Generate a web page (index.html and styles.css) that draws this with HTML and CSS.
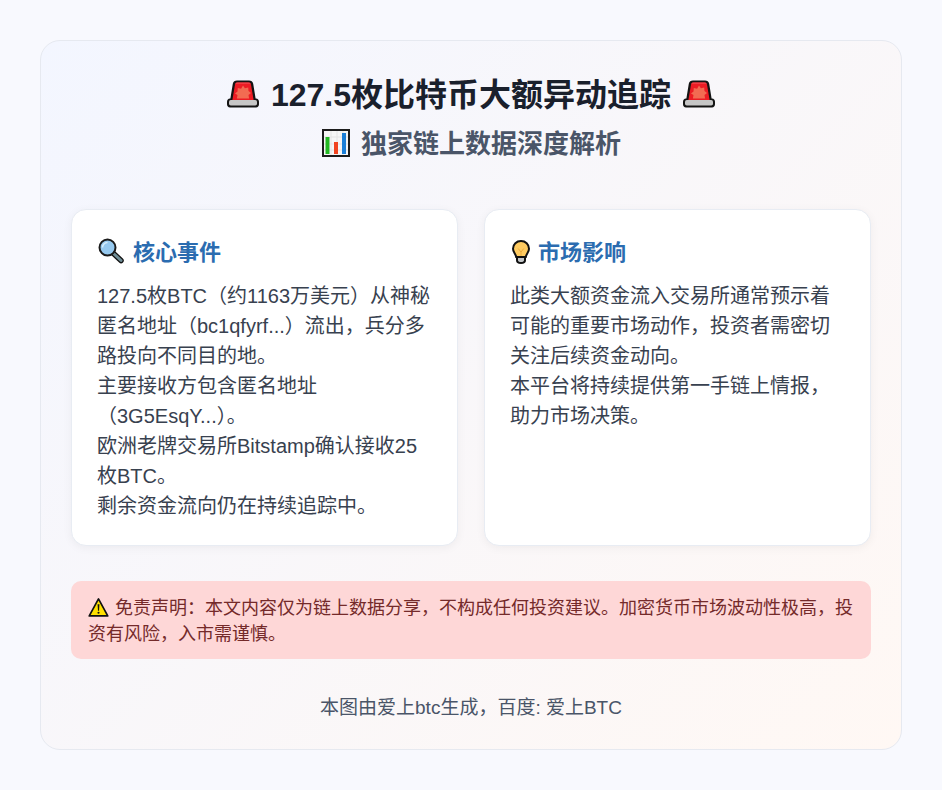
FILE: index.html
```html
<!DOCTYPE html>
<html lang="zh-CN">
<head>
<meta charset="utf-8">
<title>127.5枚比特币大额异动追踪</title>
<link rel="stylesheet" href="styles.css">
</head>
<body>
<svg class="defs" width="0" height="0" aria-hidden="true">
  <symbol id="siren" viewBox="0 0 32 28">
    <path d="M10 0.500h12c2.200 0 3.700 1.200 4.200 3.200L28.600 18.500h.4c1.800 0 3 1.300 3 3.200v2.600c0 2-1.200 3.200-3 3.200H3c-1.800 0-3-1.200-3-3.200v-2.600c0-1.900 1.200-3.200 3-3.200h.4L5.800 3.700c.5-2 2-3.200 4.200-3.200z" fill="#141414"/>
    <path d="M10.500 2.500h11c1.300 0 2.200.7 2.500 2L26.600 20H5.400L8 4.500c.3-1.300 1.200-2 2.500-2z" fill="#ec1c24"/>
    <path d="M10.500 2.500h11c1.100 0 1.900.5 2.300 1.300H8.200c.4-.8 1.200-1.300 2.300-1.300z" fill="#f4464d"/>
    <path d="M16 5.500l1.900 2.800 3.300-.8.300 3.400 2.500 2.100-2.500 2.100.6 3.400H9.900l.6-3.400L8 13.500l2.500-2.100.3-3.400 3.300.8z" fill="#f26b52"/>
    <rect x="2" y="20" width="28" height="5.500" rx="1.800" fill="#c6c6c6"/>
  </symbol>
  <symbol id="chart" viewBox="0 0 28 28">
    <rect x="1" y="1" width="26" height="26" fill="#f6f6f6" stroke="#1c1c1c" stroke-width="2"/>
    <path d="M2 8h24M2 15h24M2 21h24M9 2v24M15 2v24M21 2v24" stroke="#e4e4e4" stroke-width="1"/>
    <rect x="3.500" y="8" width="4" height="17" fill="#22b922"/>
    <rect x="12" y="13" width="4" height="12" fill="#f1431f"/>
    <rect x="20" y="4" width="4" height="21" fill="#1b7fd8"/>
  </symbol>
  <symbol id="lens" viewBox="0 0 26 26">
    <path d="M15.500 15.500l7.500 7" stroke="#111" stroke-width="5.500" stroke-linecap="round"/>
    <path d="M15.500 15.500l7.500 7" stroke="#6f8d96" stroke-width="3" stroke-linecap="round"/>
    <circle cx="9.500" cy="9.500" r="8" fill="#96c9ef" stroke="#1b1b1b" stroke-width="2"/>
    <path d="M4.500 9.500a5 5 0 0 1 5-5" fill="none" stroke="#d8eefc" stroke-width="1.500"/>
  </symbol>
  <symbol id="bulb" viewBox="0 0 18 24">
    <path d="M9 1C4.500 1 1 4.300 1 8.700c0 3.500 2.700 5 3.200 8.300h9.600c.5-3.300 3.200-4.800 3.200-8.300C17 4.300 13.500 1 9 1z" fill="#fecb61" stroke="#111" stroke-width="2"/>
    <path d="M6.200 8.500L9 12l2.800-3.500M9 12v5" fill="none" stroke="#eaa93c" stroke-width="1"/>
    <path d="M5 17h8v3.200c0 1.900-1.700 2.800-4 2.800s-4-.9-4-2.800z" fill="#c3c6c8" stroke="#111" stroke-width="2"/>
  </symbol>
  <symbol id="warn" viewBox="0 0 20 20">
    <path d="M10 1.800L18.800 18H1.200z" fill="#ffe000" stroke="#111" stroke-width="1.600" stroke-linejoin="round"/>
    <path d="M9.100 7h1.800l-.4 6h-1z" fill="#111"/>
    <circle cx="10" cy="15" r="1" fill="#111"/>
  </symbol>
</svg>
<main class="poster">
  <header class="head">
    <h1 class="title"><svg class="emoji-title"><use href="#siren"/></svg> 127.5枚比特币大额异动追踪 <svg class="emoji-title"><use href="#siren"/></svg></h1>
    <h2 class="subtitle"><svg class="emoji-sub"><use href="#chart"/></svg> 独家链上数据深度解析</h2>
  </header>
  <section class="cards">
    <article class="card">
      <h3 class="card-title"><svg class="emoji-lens"><use href="#lens"/></svg> 核心事件</h3>
      <p class="line">127.5枚BTC（约1163万美元）从神秘匿名地址（bc1qfyrf...）流出，兵分多路投向不同目的地。</p>
      <p class="line">主要接收方包含匿名地址（3G5EsqY...）。</p>
      <p class="line">欧洲老牌交易所Bitstamp确认接收25枚BTC。</p>
      <p class="line">剩余资金流向仍在持续追踪中。</p>
    </article>
    <article class="card">
      <h3 class="card-title"><svg class="emoji-bulb"><use href="#bulb"/></svg> 市场影响</h3>
      <p class="line">此类大额资金流入交易所通常预示着可能的重要市场动作，投资者需密切关注后续资金动向。</p>
      <p class="line">本平台将持续提供第一手链上情报，助力市场决策。</p>
    </article>
  </section>
  <aside class="notice"><svg class="emoji-warn"><use href="#warn"/></svg> 免责声明：本文内容仅为链上数据分享，不构成任何投资建议。加密货币市场波动性极高，投资有风险，入市需谨慎。</aside>
  <footer class="foot">本图由爱上btc生成，百度: 爱上BTC</footer>
</main>
</body>
</html>
```

FILE: styles.css
```css
* { box-sizing: border-box; }
html, body { margin: 0; padding: 0; }
body {
  width: 942px;
  height: 790px;
  padding: 40px;
  overflow: hidden;
  background: #f8f9fe;
  font-family: "Liberation Sans", "Noto Sans CJK SC", sans-serif;
}
.defs { position: absolute; }
.poster {
  width: 862px;
  height: 710px;
  padding: 30px;
  border: 1px solid #e6e9f0;
  border-radius: 20px;
  background: linear-gradient(135deg, #f3f6ff 0%, #fff8f4 100%);
}
.head { text-align: center; margin-bottom: 45px; }
.title {
  margin: 0;
  font-size: 32px;
  line-height: 48px;
  font-weight: 700;
  color: #1a202c;
}
.subtitle {
  margin: 6px 0 0;
  font-size: 26px;
  line-height: 39px;
  font-weight: 700;
  color: #4a5568;
}
.emoji-title { width: 32px; height: 28px; margin: 0 3.5px; vertical-align: -2px; }
.emoji-sub { width: 28px; height: 28px; margin: 0 4px 0 1px; vertical-align: -4px; }
.emoji-lens { width: 26px; height: 26px; margin: 0 3px 0 1px; vertical-align: -4px; }
.emoji-bulb { width: 18px; height: 24px; margin: 0 2px 0 2px; vertical-align: -4px; }
.emoji-warn { width: 21px; height: 21px; margin-right: 1px; vertical-align: -4px; }
.cards {
  display: grid;
  grid-template-columns: 1fr 1fr;
  gap: 26px;
}
.card {
  height: 337px;
  padding: 26px 25px 25px;
  border: 1px solid #e8ecf3;
  border-radius: 15px;
  background: #fff;
  box-shadow: 0 2px 10px rgba(0, 0, 0, 0.05);
}
.card-title {
  margin: 0 0 12px;
  font-size: 22px;
  line-height: 33px;
  font-weight: 700;
  color: #2b6cb0;
}
.line {
  margin: 0;
  font-size: 20px;
  line-height: 30px;
  color: #38414f;
}
.notice {
  margin-top: 35px;
  padding: 14px 17px 12px;
  border-radius: 10px;
  background: #fed7d7;
  font-size: 18px;
  line-height: 26px;
  color: #742a2a;
}
.foot {
  margin-top: 35px;
  text-align: center;
  font-size: 19px;
  line-height: 27px;
  color: #4a5568;
}
```
